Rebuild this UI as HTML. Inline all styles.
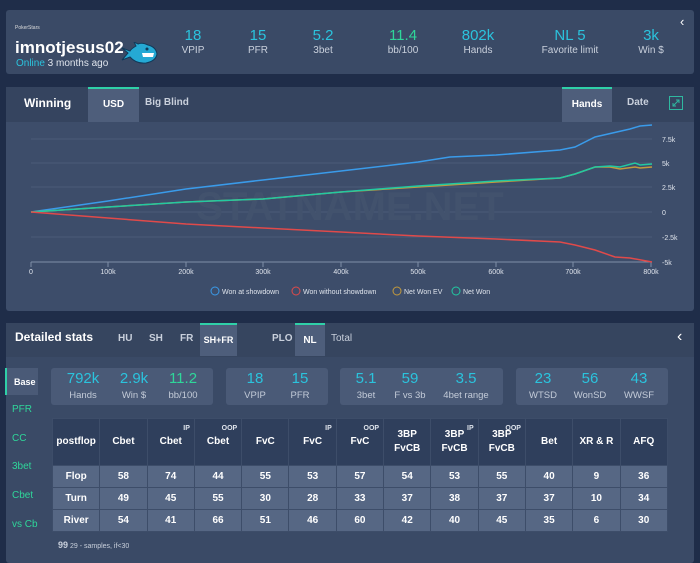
<!DOCTYPE html>
<html><head><meta charset="utf-8"><style>
*{box-sizing:border-box;margin:0;padding:0}
body{width:700px;height:561px;background:#1f2d49;font-family:"Liberation Sans",sans-serif;color:#fff;position:relative;overflow:hidden}
.abs{position:absolute}
.card{position:absolute;background:#394864;border-radius:3px}
.c{text-align:center}
.cy{color:#2bc3dd}.gr{color:#2fd69a}
.lab{color:#c9d0dc;font-size:10px}
.tab{position:absolute;font-size:10px;font-weight:bold;color:#dfe4ec;text-align:center}
.tab.on{background:#4e5e7b;border-top:2px solid #2fd0a8;color:#fff}
.sb{position:absolute;background:#4a5a77;border-radius:3px}
.sv{position:absolute;font-size:15px;text-align:center}
.sl{position:absolute;font-size:9.5px;color:#c3cbd8;text-align:center}
table{position:absolute;left:52px;top:418px;border-collapse:collapse;font-size:10px;font-weight:bold}
td{width:47.3px;text-align:center;border:1px solid #3d4d69;background:#566784;height:22px}
tr.h td{background:#2f3f5c;height:47px;position:relative;line-height:14px}
sup{position:absolute;right:4px;top:3px;font-size:7px;color:#dfe4ec}
.side{position:absolute;left:12px;font-size:10px;color:#2fd69a}
</style></head><body>
<div class="card" style="left:6px;top:10px;width:688px;height:64px;background:#3a4a66"></div>
<div class="abs" style="left:15px;top:25px;font-size:5px;color:#ddd">PokerStars</div>
<div class="abs" style="left:15px;top:38px;font-size:17px;font-weight:bold">imnotjesus02</div>
<div class="abs" style="left:16px;top:58px;font-size:10px;color:#dfe4ec"><span class="cy">Online</span> 3 months ago</div>
<svg class="abs" style="left:120px;top:42px" width="38" height="24" viewBox="0 0 38 24"><path d="M2 6 L8 11 L2 18 L10 15 Q16 22 26 21 Q36 19 37 12 Q36 5 28 3 Q22 0 18 2 L14 0 L16 4 Q11 7 10 9 Z" fill="#25a9d4" stroke="#103a5a" stroke-width="1"/><path d="M22 11 L34 11 L33 15 L23 15Z" fill="#fff"/><circle cx="27" cy="7" r="1.5" fill="#103a5a"/></svg>
<div class="abs c cy" style="left:173px;top:27px;width:40px;font-size:15px">18</div><div class="abs c lab" style="left:173px;top:45px;width:40px">VPIP</div>
<div class="abs c cy" style="left:238px;top:27px;width:40px;font-size:15px">15</div><div class="abs c lab" style="left:238px;top:45px;width:40px">PFR</div>
<div class="abs c cy" style="left:303px;top:27px;width:40px;font-size:15px">5.2</div><div class="abs c lab" style="left:303px;top:45px;width:40px">3bet</div>
<div class="abs c gr" style="left:378px;top:27px;width:50px;font-size:15px">11.4</div><div class="abs c lab" style="left:378px;top:45px;width:50px">bb/100</div>
<div class="abs c cy" style="left:453px;top:27px;width:50px;font-size:15px">802k</div><div class="abs c lab" style="left:453px;top:45px;width:50px">Hands</div>
<div class="abs c cy" style="left:535px;top:27px;width:70px;font-size:15px">NL 5</div><div class="abs c lab" style="left:535px;top:45px;width:70px">Favorite limit</div>
<div class="abs c cy" style="left:631px;top:27px;width:40px;font-size:15px">3k</div><div class="abs c lab" style="left:631px;top:45px;width:40px">Win $</div>
<div class="abs" style="left:680px;top:14px;font-size:13px">&#8249;</div>
<div class="card" style="left:6px;top:87px;width:688px;height:224px;background:#3d4d6a"></div>
<div class="abs" style="left:6px;top:87px;width:688px;height:35px;background:#35445f"></div>
<div class="abs" style="left:24px;top:96px;font-size:12px;font-weight:bold">Winning</div>
<div class="tab on" style="left:88px;top:87px;width:51px;height:35px;padding-top:10px">USD</div>
<div class="tab" style="left:145px;top:97px;color:#c9d0dc">Big Blind</div>
<div class="tab on" style="left:562px;top:87px;width:50px;height:35px;padding-top:10px">Hands</div>
<div class="tab" style="left:627px;top:97px;color:#c9d0dc">Date</div>
<div class="abs" style="left:669px;top:96px;width:14px;height:14px;border:1px solid #2fb8a0"></div>
<svg class="abs" style="left:669px;top:96px" width="14" height="14"><path d="M4 10 L10 4 M7 4 H10 V7 M4 7 V10 H7" stroke="#2fb8a0" fill="none"/></svg>
<svg class="abs" style="left:0;top:120px" width="700" height="190">
<g stroke="#4c5c78" stroke-width="1"><line x1="31" y1="19" x2="652" y2="19"/><line x1="31" y1="43" x2="652" y2="43"/><line x1="31" y1="67" x2="652" y2="67"/><line x1="31" y1="92" x2="652" y2="92"/><line x1="31" y1="117" x2="652" y2="117"/></g>
<line x1="31" y1="142" x2="652" y2="142" stroke="#8090a8"/>
<g stroke="#8090a8"><line x1="31" y1="142" x2="31" y2="147"/><line x1="108" y1="142" x2="108" y2="147"/><line x1="186" y1="142" x2="186" y2="147"/><line x1="263" y1="142" x2="263" y2="147"/><line x1="341" y1="142" x2="341" y2="147"/><line x1="418" y1="142" x2="418" y2="147"/><line x1="496" y1="142" x2="496" y2="147"/><line x1="573" y1="142" x2="573" y2="147"/><line x1="651" y1="142" x2="651" y2="147"/></g>
<text x="350" y="100" font-size="40" font-weight="bold" fill="#42526d" text-anchor="middle" font-family="Liberation Sans">STATNAME.NET</text>
<g font-size="7" fill="#dfe4ec" font-family="Liberation Sans"><text x="662" y="22">7.5k</text><text x="662" y="46">5k</text><text x="662" y="70">2.5k</text><text x="662" y="95">0</text><text x="662" y="120">-2.5k</text><text x="662" y="145">-5k</text>
<g text-anchor="middle"><text x="31" y="154">0</text><text x="108" y="154">100k</text><text x="186" y="154">200k</text><text x="263" y="154">300k</text><text x="341" y="154">400k</text><text x="418" y="154">500k</text><text x="496" y="154">600k</text><text x="573" y="154">700k</text><text x="651" y="154">800k</text></g></g>
<polyline fill="none" stroke="#3a9bea" stroke-width="1.5" points="31,92 108,81 186,69 263,60 341,51 418,42 450,37 496,35 560,30 575,27 595,17 630,9 640,6 652,5"/>
<polyline fill="none" stroke="#c49a3c" stroke-width="1.5" points="31,92 108,87 186,82 263,79 341,72 418,67 496,62 560,58 575,54 595,47 610,47 620,49 635,47 640,48 652,47"/>
<polyline fill="none" stroke="#22c9a2" stroke-width="1.5" points="31,92 108,87 186,82 263,79 341,72 418,66 496,61 560,58 575,54 595,47 610,46 620,47 635,43 640,45 652,44"/>
<polyline fill="none" stroke="#e04a4a" stroke-width="1.5" points="31,92 108,98 186,104 263,108 341,112 418,116 496,119 560,122 575,125 595,130 615,137 630,138 652,142"/>
<g font-size="7" fill="#dfe4ec" font-family="Liberation Sans"><circle cx="215" cy="171" r="4" fill="none" stroke="#3a9bea"/><text x="222" y="174">Won at showdown</text>
<circle cx="296" cy="171" r="4" fill="none" stroke="#e04a4a"/><text x="303" y="174">Won without showdown</text>
<circle cx="397" cy="171" r="4" fill="none" stroke="#c49a3c"/><text x="404" y="174">Net Won EV</text>
<circle cx="456" cy="171" r="4" fill="none" stroke="#22c9a2"/><text x="463" y="174">Net Won</text></g>
</svg>
<div class="card" style="left:6px;top:323px;width:688px;height:240px;background:#3a4a66"></div>
<div class="abs" style="left:6px;top:323px;width:688px;height:34px;background:#36455f"></div>
<div class="abs" style="left:15px;top:330px;font-size:12px;font-weight:bold">Detailed stats</div>
<div class="tab" style="left:118px;top:333px;color:#c9d0dc">HU</div>
<div class="tab" style="left:149px;top:333px;color:#c9d0dc">SH</div>
<div class="tab" style="left:180px;top:333px;color:#c9d0dc">FR</div>
<div class="tab on" style="left:200px;top:323px;width:37px;height:33px;padding-top:10px;font-size:9px">SH+FR</div>
<div class="tab" style="left:272px;top:333px;color:#c9d0dc">PLO</div>
<div class="tab on" style="left:295px;top:323px;width:30px;height:33px;padding-top:10px">NL</div>
<div class="tab" style="left:331px;top:333px;color:#c9d0dc;font-weight:normal">Total</div>
<div class="abs" style="left:677px;top:328px;font-size:16px">&#8249;</div>
<div class="abs" style="left:5px;top:368px;width:33px;height:27px;background:#4a5a77;border-left:2px solid #2fd0a8;font-size:9px;font-weight:bold;padding:9px 0 0 7px">Base</div>
<div class="side" style="top:404px">PFR</div><div class="side" style="top:433px">CC</div><div class="side" style="top:461px">3bet</div><div class="side" style="top:490px">Cbet</div><div class="side" style="top:519px">vs Cb</div>
<div class="sb" style="left:51px;top:368px;width:162px;height:37px"></div>
<div class="sb" style="left:226px;top:368px;width:102px;height:37px"></div>
<div class="sb" style="left:340px;top:368px;width:163px;height:37px"></div>
<div class="sb" style="left:516px;top:368px;width:152px;height:37px"></div>
<div class="sv cy" style="left:58px;top:370px;width:50px">792k</div><div class="sl" style="left:58px;top:390px;width:50px">Hands</div>
<div class="sv cy" style="left:114px;top:370px;width:40px">2.9k</div><div class="sl" style="left:114px;top:390px;width:40px">Win $</div>
<div class="sv gr" style="left:163px;top:370px;width:40px">11.2</div><div class="sl" style="left:163px;top:390px;width:40px">bb/100</div>
<div class="sv cy" style="left:235px;top:370px;width:40px">18</div><div class="sl" style="left:235px;top:390px;width:40px">VPIP</div>
<div class="sv cy" style="left:280px;top:370px;width:40px">15</div><div class="sl" style="left:280px;top:390px;width:40px">PFR</div>
<div class="sv cy" style="left:346px;top:370px;width:40px">5.1</div><div class="sl" style="left:346px;top:390px;width:40px">3bet</div>
<div class="sv cy" style="left:390px;top:370px;width:40px">59</div><div class="sl" style="left:387px;top:390px;width:46px">F vs 3b</div>
<div class="sv cy" style="left:446px;top:370px;width:40px">3.5</div><div class="sl" style="left:436px;top:390px;width:60px">4bet range</div>
<div class="sv cy" style="left:523px;top:370px;width:40px">23</div><div class="sl" style="left:523px;top:390px;width:40px">WTSD</div>
<div class="sv cy" style="left:570px;top:370px;width:40px">56</div><div class="sl" style="left:567px;top:390px;width:46px">WonSD</div>
<div class="sv cy" style="left:619px;top:370px;width:40px">43</div><div class="sl" style="left:619px;top:390px;width:40px">WWSF</div>
<table>
<tr class="h"><td>postflop</td><td>Cbet</td><td>Cbet<sup>IP</sup></td><td>Cbet<sup>OOP</sup></td><td>FvC</td><td>FvC<sup>IP</sup></td><td>FvC<sup>OOP</sup></td><td>3BP<br>FvCB</td><td>3BP<br>FvCB<sup>IP</sup></td><td>3BP<br>FvCB<sup>OOP</sup></td><td>Bet</td><td>XR &amp; R</td><td>AFQ</td></tr>
<tr><td>Flop</td><td>58</td><td>74</td><td>44</td><td>55</td><td>53</td><td>57</td><td>54</td><td>53</td><td>55</td><td>40</td><td>9</td><td>36</td></tr>
<tr><td>Turn</td><td>49</td><td>45</td><td>55</td><td>30</td><td>28</td><td>33</td><td>37</td><td>38</td><td>37</td><td>37</td><td>10</td><td>34</td></tr>
<tr><td>River</td><td>54</td><td>41</td><td>66</td><td>51</td><td>46</td><td>60</td><td>42</td><td>40</td><td>45</td><td>35</td><td>6</td><td>30</td></tr>
</table>
<div class="abs" style="left:58px;top:540px;font-size:7px;color:#c9d0dc"><b style="font-size:9px">99</b> 29 - samples, if&lt;30</div>
</body></html>
